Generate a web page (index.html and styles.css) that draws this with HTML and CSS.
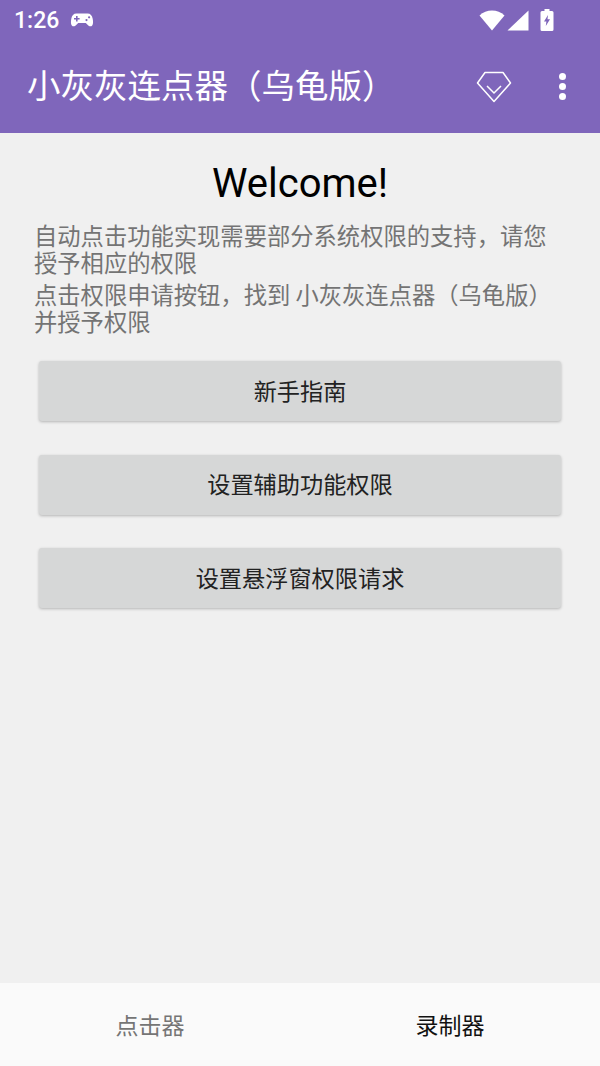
FILE: index.html
```html
<!DOCTYPE html>
<html lang="zh-CN">

<head>
    <meta charset="UTF-8">
    <meta name="viewport" content="width=device-width, initial-scale=1.0">
    <title>小灰灰连点器（乌龟版）</title>
    <link rel="stylesheet" href="styles.css">
</head>

<body>
    <div class="app">
        <header class="header">
            <div class="status-bar">
                <span class="clock">1:26</span>
                <svg class="gamepad" width="24" height="16" viewBox="0 0 24 16">
                    <path fill="#fff" fill-rule="evenodd" d="M6.500 1.500h11c3 0 4.600 2 5.200 5.200.5 3 .6 5.300-.5 6.700-1.200 1.400-3.200 1-4.400-.5L15.800 11H8.200l-2 1.900c-1.200 1.500-3.200 1.900-4.400.5-1.100-1.400-1-3.700-.5-6.700C1.900 3.500 3.500 1.500 6.500 1.500zM6 4v2H4v1.600h2v2h1.600v-2h2V6h-2V4zm10.500 3a1.100 1.100 0 1 0 0 2.200 1.100 1.100 0 0 0 0-2.200zm2.600-2.800a1.100 1.100 0 1 0 0 2.200 1.100 1.100 0 0 0 0-2.200z"/>
                </svg>
                <div class="status-icons">
                    <svg class="wifi" width="26" height="21" viewBox="0 0 26 21">
                        <path fill="#fff" d="M0.500 5.500C4 2.200 8.300.5 13 .5s9 1.700 12.500 5L13 20.500z"/>
                    </svg>
                    <svg class="signal" width="22" height="21" viewBox="0 0 22 21">
                        <path fill="#fff" d="M21.500 .5V20.500H.5z"/>
                    </svg>
                    <svg class="battery" width="14" height="22" viewBox="0 0 14 22">
                        <path fill="#fff" fill-rule="evenodd" d="M4.500 0h5v2H12a1.500 1.500 0 0 1 1.500 1.500v17A1.500 1.500 0 0 1 12 22H2A1.500 1.500 0 0 1 .5 20.500v-17A1.500 1.500 0 0 1 2 2h2.500zM8 6 4 12.500h2.400L5.800 17 10 10.300H7.500z"/>
                    </svg>
                </div>
            </div>
            <div class="toolbar">
                <h1 class="title">小灰灰连点器（乌龟版）</h1>
                <svg class="diamond" width="36" height="32" viewBox="0 0 36 32">
                    <path fill="none" stroke="#fff" stroke-width="1.500" stroke-linejoin="round" d="M9 1.500h18L34.500 12 18 30.500 1.500 12z"/>
                    <path fill="none" stroke="#fff" stroke-width="1.500" d="M11 15l7 7 7-7"/>
                </svg>
                <div class="more">
                    <span class="dot"></span>
                    <span class="dot"></span>
                    <span class="dot"></span>
                </div>
            </div>
        </header>

        <main class="content">
            <h2 class="welcome">Welcome!</h2>
            <div class="intro">
                <p>自动点击功能实现需要部分系统权限的支持，请您授予相应的权限</p>
                <p>点击权限申请按钮，找到 小灰灰连点器（乌龟版）并授予权限</p>
            </div>
            <div class="actions">
                <button class="btn">新手指南</button>
                <button class="btn">设置辅助功能权限</button>
                <button class="btn">设置悬浮窗权限请求</button>
            </div>
        </main>

        <nav class="tabs">
            <div class="tab">点击器</div>
            <div class="tab active">录制器</div>
        </nav>
    </div>
</body>

</html>
```

FILE: styles.css
```css
body {
    margin: 0;
    font-family: "Noto Sans CJK SC", "Noto Sans", sans-serif;
    background-color: #f0f0f0;
}

.app {
    display: flex;
    flex-direction: column;
    width: 600px;
    height: 1066px;
    overflow: hidden;
}

.header {
    height: 133px;
    background-color: #7f66bb;
    color: #fff;
    flex-shrink: 0;
}

.status-bar {
    display: flex;
    align-items: center;
    height: 40px;
    padding: 0 46px 0 14px;
}

.clock {
    font-family: Roboto, sans-serif;
    font-size: 23px;
    font-weight: 500;
    margin-right: 11px;
}

.status-icons {
    display: flex;
    align-items: center;
    margin-left: auto;
}

.signal {
    margin-left: 2px;
    margin-right: 11px;
}

.toolbar {
    display: flex;
    align-items: center;
    height: 93px;
    padding: 0 34px 0 27px;
}

.title {
    flex: 1;
    margin: 0 0 6px;
    font-size: 33.500px;
    font-weight: 400;
    line-height: 44px;
    white-space: nowrap;
}

.diamond {
    margin-right: 47px;
}

.more {
    display: flex;
    flex-direction: column;
    gap: 3px;
}

.dot {
    width: 7px;
    height: 7px;
    background-color: #fff;
    border-radius: 50%;
}

.content {
    flex: 1;
    padding: 0 34px;
}

.welcome {
    margin: 25px 0 12px;
    font-family: Roboto, sans-serif;
    font-size: 40px;
    font-weight: 400;
    line-height: 52px;
    text-align: center;
    color: #000;
}

.intro {
    color: #747474;
    font-size: 23.300px;
    line-height: 27px;
}

.intro p {
    margin: 0 0 5px;
}

.actions {
    display: flex;
    flex-direction: column;
    gap: 33.500px;
    margin: 26px 5px 0;
}

.btn {
    height: 60px;
    padding: 0 0 3px;
    border: none;
    border-radius: 3px;
    background-color: #d6d7d7;
    box-shadow: 0 1px 3px rgba(0, 0, 0, 0.25);
    color: #222;
    font-family: inherit;
    font-size: 23.200px;
}

.tabs {
    display: flex;
    height: 83px;
    flex-shrink: 0;
    background-color: #fafafa;
}

.tab {
    flex: 1;
    display: flex;
    align-items: center;
    justify-content: center;
    padding-bottom: 1px;
    color: #757575;
    font-size: 23px;
}

.tab.active {
    color: #111;
}
```
